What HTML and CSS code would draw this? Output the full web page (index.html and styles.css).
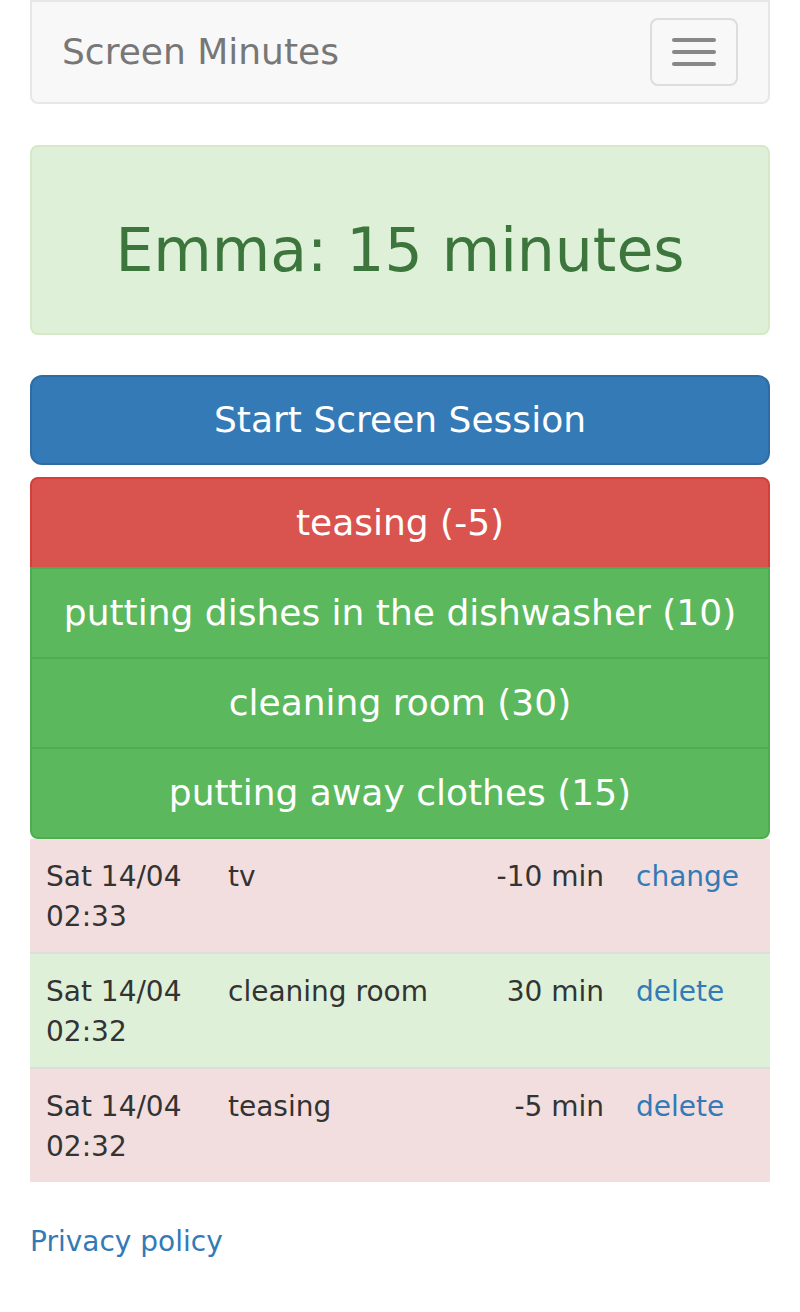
FILE: index.html
```html
<!DOCTYPE html>
<html lang="en">
<head>
    <meta charset="UTF-8">
    <meta name="viewport" content="width=device-width, initial-scale=1.0">
    <title>Screen Minutes</title>
    <link rel="stylesheet" href="styles.css">
</head>
<body>
    <div class="container">
        <nav class="navbar">
            <a class="navbar-brand" href="#">Screen Minutes</a>
            <button class="navbar-toggle" type="button" aria-label="Toggle navigation">
                <span class="icon-bar"></span>
                <span class="icon-bar"></span>
                <span class="icon-bar"></span>
            </button>
        </nav>

        <div class="alert alert-success">
            <h2>Emma: 15 minutes</h2>
        </div>

        <button class="btn btn-primary btn-block">Start Screen Session</button>

        <div class="btn-group-vertical">
            <button class="btn btn-danger">teasing (-5)</button>
            <button class="btn btn-success">putting dishes in the dishwasher (10)</button>
            <button class="btn btn-success">cleaning room (30)</button>
            <button class="btn btn-success">putting away clothes (15)</button>
        </div>

        <table class="table">
            <colgroup>
                <col class="col-date">
                <col class="col-desc">
                <col class="col-min">
                <col class="col-action">
            </colgroup>
            <tbody>
                <tr class="danger">
                    <td>Sat 14/04 02:33</td>
                    <td>tv</td>
                    <td class="text-right">-10 min</td>
                    <td><a href="#">change</a></td>
                </tr>
                <tr class="success">
                    <td>Sat 14/04 02:32</td>
                    <td>cleaning room</td>
                    <td class="text-right">30 min</td>
                    <td><a href="#">delete</a></td>
                </tr>
                <tr class="danger">
                    <td>Sat 14/04 02:32</td>
                    <td>teasing</td>
                    <td class="text-right">-5 min</td>
                    <td><a href="#">delete</a></td>
                </tr>
            </tbody>
        </table>

        <footer class="footer">
            <a href="#">Privacy policy</a>
        </footer>
    </div>
</body>
</html>
```

FILE: styles.css
```css
* {
    box-sizing: border-box;
}

body {
    margin: 0;
    font-family: "DejaVu Sans", "Helvetica Neue", Helvetica, Arial, sans-serif;
    font-size: 28px;
    line-height: 40px;
    color: #333;
    background-color: #fff;
}

a {
    color: #337ab7;
    text-decoration: none;
}

.container {
    padding: 0 30px;
}

/* navbar */
.navbar {
    display: flex;
    justify-content: space-between;
    align-items: flex-start;
    min-height: 104px;
    margin-bottom: 41px;
    background-color: #f8f8f8;
    border: 2px solid #e7e7e7;
    border-radius: 0 0 8px 8px;
}

.navbar-brand {
    padding: 30px;
    font-size: 36px;
    line-height: 40px;
    color: #777;
}

.navbar-toggle {
    display: flex;
    flex-direction: column;
    gap: 8px;
    margin: 16px 30px 0 0;
    padding: 18px 20px;
    background: transparent;
    border: 2px solid #ddd;
    border-radius: 8px;
}

.icon-bar {
    display: block;
    width: 44px;
    height: 4px;
    background-color: #888;
    border-radius: 2px;
}

/* alert */
.alert {
    padding: 0 30px;
    margin-bottom: 40px;
    border: 2px solid transparent;
    border-radius: 8px;
}

.alert-success {
    color: #3c763d;
    background-color: #dff0d8;
    border-color: #d6e9c6;
}

.alert h2 {
    margin: 70px 0 50px;
    font-size: 60px;
    font-weight: 500;
    line-height: 66px;
    text-align: center;
}

/* buttons */
.btn {
    display: block;
    width: 100%;
    padding: 19px 8px;
    font-family: inherit;
    font-size: 36px;
    line-height: 48px;
    color: #fff;
    text-align: center;
    white-space: nowrap;
    border: 2px solid transparent;
    border-radius: 12px;
    cursor: pointer;
}

.btn-block {
    margin-bottom: 12px;
}

.btn-primary {
    background-color: #337ab7;
    border-color: #2e6da4;
}

.btn-danger {
    background-color: #d9534f;
    border-color: #d43f3a;
}

.btn-success {
    background-color: #5cb85c;
    border-color: #4cae4c;
}

.btn-group-vertical .btn {
    padding-top: 20px;
    padding-bottom: 20px;
    border-radius: 0;
}

.btn-group-vertical .btn + .btn {
    margin-top: -2px;
}

.btn-group-vertical .btn:first-child {
    border-radius: 8px 8px 0 0;
}

.btn-group-vertical .btn:last-child {
    border-radius: 0 0 8px 8px;
}

/* history table */
.table {
    width: 100%;
    margin-bottom: 40px;
    border-collapse: collapse;
    table-layout: fixed;
}

.col-date { width: 182px; }
.col-desc { width: 258px; }
.col-min { width: 150px; }
.col-action { width: 150px; }

.table td {
    padding: 18px 16px 15px;
    vertical-align: top;
    border-top: 2px solid #ddd;
}

.table tr:first-child td {
    border-top: 0;
}

.table tr.danger td {
    background-color: #f2dede;
}

.table tr.success td {
    background-color: #dff0d8;
}

.text-right {
    text-align: right;
}

.footer {
    padding-bottom: 40px;
}
```
